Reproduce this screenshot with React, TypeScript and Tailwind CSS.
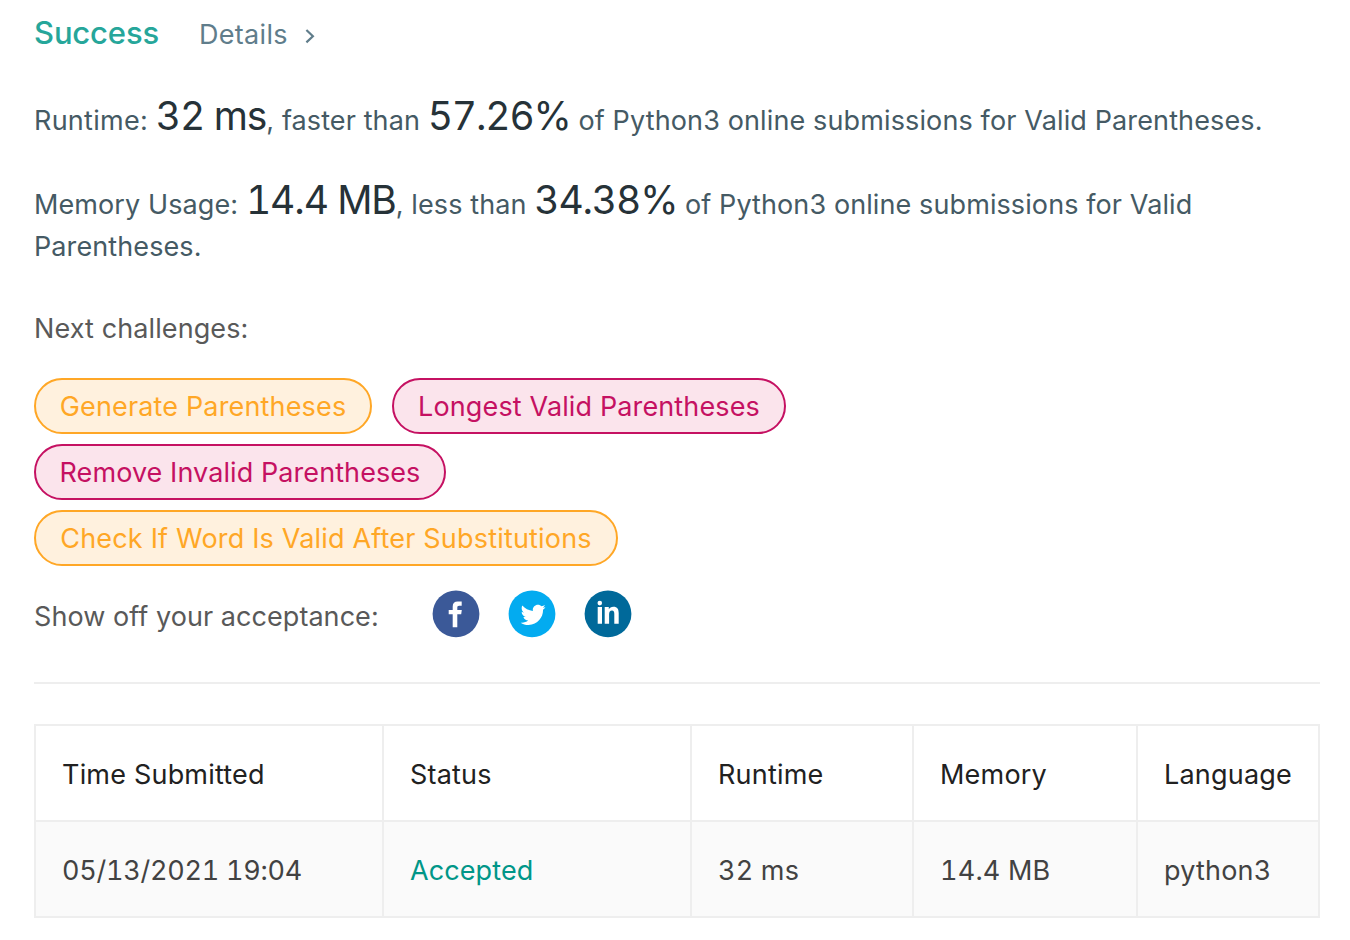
import type { ReactNode } from "react";
import { FaTwitter } from "react-icons/fa";

const ORANGE = "border-[#ffa726] bg-[#fff1de] text-[#ffa726]";
const PINK = "border-[#c51162] bg-[#fbe4ec] text-[#c51162]";

const challenges = [
  [
    { name: "Generate Parentheses", tone: ORANGE, size: "w-[338px] tracking-[0.16px]" },
    { name: "Longest Valid Parentheses", tone: PINK, size: "w-[394px] tracking-[0.13px]" },
  ],
  [{ name: "Remove Invalid Parentheses", tone: PINK, size: "w-[412px] tracking-[0.08px]" }],
  [{ name: "Check If Word Is Valid After Substitutions", tone: ORANGE, size: "w-[584px] tracking-[0.18px]" }],
];

const headers = ["Time Submitted", "Status", "Runtime", "Memory", "Language"];

const submission = [
  { value: "05/13/2021 19:04", style: "tracking-[-0.25px] text-[#424242]" },
  { value: "Accepted", style: "tracking-[0.1px] text-[#009688]" },
  { value: "32 ms", style: "text-[#424242]" },
  { value: "14.4 MB", style: "text-[#424242]" },
  { value: "python3", style: "text-[#424242]" },
];

function Big({ children, tracking }: { children: string; tracking: string }) {
  return <span className={`text-[39px] leading-[42px] tabular-nums text-[#263238] ${tracking}`}>{children}</span>;
}

function Badge({ fill, children }: { fill: string; children: ReactNode }) {
  return (
    <svg width="48" height="48" viewBox="0 0 48 48" fill="#fff">
      <circle cx="24" cy="23.9" r="23.4" fill={fill} />
      {children}
    </svg>
  );
}

export default function App() {
  return (
    <main className="h-[940px] w-[1350px] overflow-hidden bg-white pl-[34px] pr-[30px] pt-[12px] font-['Inter',sans-serif] text-[27px] leading-[42px] tracking-[0.1px] text-[#595959]">
      <header className="flex h-[42px] items-baseline">
        <h1 className="w-[165px] text-[31px] font-medium tracking-[-0.15px] text-[#26a69a]">Success</h1>
        <a className="flex items-baseline tracking-[0.3px] text-[#607d8b]">
          <span className="w-[106px]">Details</span>
          <svg width="10" height="16" viewBox="0 0 10 16" fill="none" stroke="currentColor" strokeWidth="2.2">
            <path d="M1.4 2 7.9 8.2 1.4 14.4" />
          </svg>
        </a>
      </header>

      <p className="mt-[41px] h-[42px] whitespace-nowrap text-[#455a64]">
        <span className="tracking-[0.26px]">Runtime: </span>
        <Big tracking="tracking-[-1.05px]">32 ms</Big>, faster than <Big tracking="tracking-[-1.15px]">57.26%</Big>
        <span className="tracking-[0.13px]"> of Python3 online submissions for Valid Parentheses.</span>
      </p>
      <p className="mt-[42px] h-[84px] whitespace-nowrap text-[#455a64]">
        Memory Usage: <Big tracking="tracking-[-1.1px]">14.4 MB</Big>, less than{" "}
        <Big tracking="tracking-[-1.15px]">34.38%</Big> of Python3 online submissions for Valid
        <br />
        Parentheses.
      </p>

      <p className="mt-[45px]">Next challenges:</p>
      <div className="mt-[28px] flex flex-col gap-2.5">
        {challenges.map((row, i) => (
          <div key={i} className="flex gap-5">
            {row.map((c) => (
              <a key={c.name} className={`flex h-14 items-center justify-center whitespace-nowrap rounded-full border-2 pt-0.5 ${c.size} ${c.tone}`}>
                {c.name}
              </a>
            ))}
          </div>
        ))}
      </div>

      <div className="mt-[24px] flex h-12 items-center">
        <span className="w-[398px] pt-1.5 tracking-[0.06px]">Show off your acceptance:</span>
        <div className="flex gap-[28px]">
          <Badge fill="#3b5998">
            <path d="M20.7 37.3V24.3H16.7V20h4v-3.6c0-3 1.8-4.9 5-4.9h4v4.3h-2.6c-1.3 0-1.8.7-1.8 1.9V20h4.5l-.6 4.3h-3.9v13z" />
          </Badge>
          <Badge fill="#03abf0">
            <FaTwitter x={12.6} y={12.3} size={25} color="#fff" />
          </Badge>
          <Badge fill="#00699a">
            <circle cx="15.8" cy="13.1" r="2.3" />
            <path d="M13.7 17.1H18v16.6h-4.3zM20.7 17.1h4.1v2.2c.9-1.6 2.4-2.6 4.6-2.6 4 0 5.3 2.4 5.3 6.4v10.6h-4.4v-9.6c0-2.3-.5-3.6-2.3-3.6-2 0-2.9 1.4-2.9 3.7v9.5h-4.4z" />
          </Badge>
        </div>
      </div>

      <hr className="mt-[44px] border-t-2 border-[#eeeeee]" />

      <div className="mt-[40px] grid grid-cols-[348px_308px_222px_224px_182px] border-l-2 border-t-2 border-[#eeeeee] tracking-[0.2px]">
        {headers.map((h) => (
          <div key={h} className="flex h-24 items-center whitespace-nowrap border-b-2 border-r-2 border-[#eeeeee] pl-[26px] pt-1 text-[#212121]">{h}</div>
        ))}
        {submission.map((cell) => (
          <div key={cell.value} className={`flex h-24 items-center whitespace-nowrap border-b-2 border-r-2 border-[#eeeeee] bg-[#fafafa] pl-[26px] pt-1 tabular-nums ${cell.style}`}>{cell.value}</div>
        ))}
      </div>
    </main>
  );
}
